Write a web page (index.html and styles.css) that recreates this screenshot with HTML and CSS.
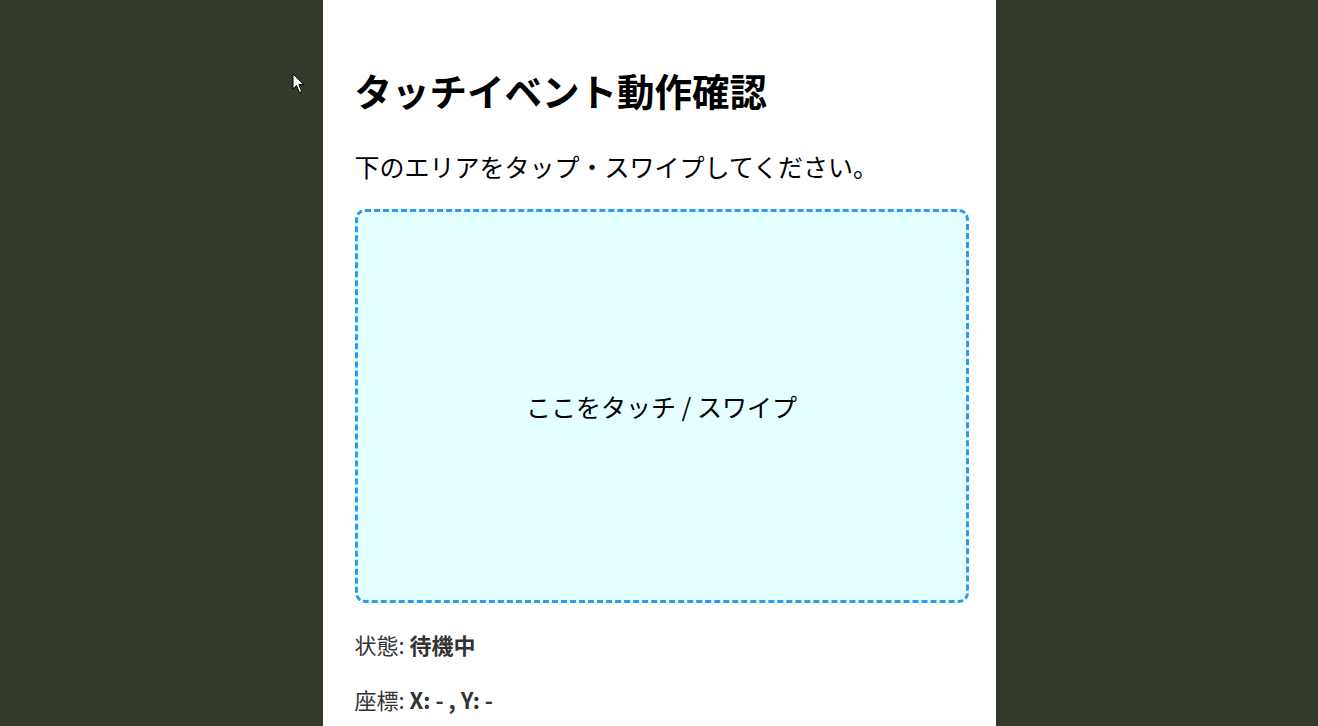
FILE: index.html
```html
<!DOCTYPE html>
<html lang="ja">
<head>
<meta charset="utf-8">
<title>タッチイベント動作確認</title>
<link rel="stylesheet" href="styles.css">
</head>
<body>
<main class="page">
  <h1 class="title">タッチイベント動作確認</h1>
  <p class="lead">下のエリアをタップ・スワイプしてください。</p>
  <div class="touch-area">ここをタッチ / スワイプ</div>
  <p class="info">状態: <strong>待機中</strong></p>
  <p class="info">座標: <strong>X: - , Y: -</strong></p>
</main>
<svg class="cursor" width="14" height="22" viewBox="0 0 14 22" aria-hidden="true">
  <path d="M1 1 L1 16 L4.5 12.5 L7.5 19.5 L9.8 18.5 L6.8 11.6 L11.8 11.6 Z" fill="#fff" stroke="#000" stroke-width="1"/>
</svg>
</body>
</html>
```
FILE: styles.css
```css
html, body {
  margin: 0;
  padding: 0;
  height: 100%;
}
body {
  background: #313a2b;
  font-family: "Noto Sans CJK JP", "Noto Sans", sans-serif;
  color: #000;
  overflow: hidden;
}
.page {
  width: 673px;
  box-sizing: border-box;
  margin: 0 auto;
  min-height: 100%;
  background: #fff;
  padding: 62px 27px 0 32px;
  display: flex;
  flex-direction: column;
}
.title {
  margin: 0;
  font-size: 37.5px;
  line-height: 56px;
  font-weight: 700;
}
.lead {
  margin: 30px 0 0;
  font-size: 25px;
  line-height: 36px;
}
.touch-area {
  margin-top: 25px;
  height: 388px;
  border: 3px dashed #2d9be8;
  border-radius: 10px;
  background: #e3ffff;
  display: flex;
  align-items: center;
  justify-content: center;
  font-size: 25px;
}
.info {
  margin: 25px 0 0;
  font-size: 22px;
  line-height: 32px;
  color: #333;
}
.info + .info {
  margin-top: 23px;
}
.info strong {
  font-weight: 700;
}
.cursor {
  position: absolute;
  left: 292px;
  top: 73px;
}
```
